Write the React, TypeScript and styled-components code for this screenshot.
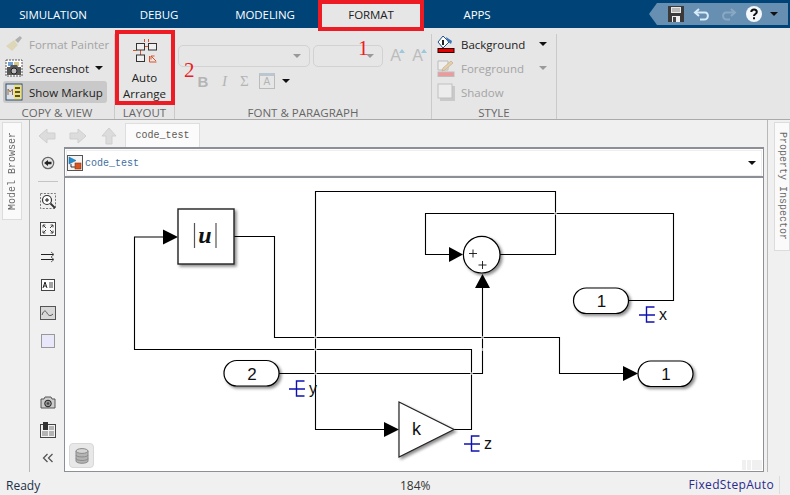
import React from "react";
import styled, { createGlobalStyle } from "styled-components";

const GlobalStyle = createGlobalStyle`
  html, body { margin: 0; padding: 0; background: #f0f0f0; }
  * { box-sizing: border-box; }
`;

const Page = styled.div`
  position: relative;
  width: 790px;
  height: 495px;
  overflow: hidden;
  display: flex;
  flex-direction: column;
  background: #f0f0f0;
  font-family: "Open Sans", "Liberation Sans", sans-serif;
  font-size: 11.5px;
  color: #222;
`;

const TabBar = styled.div`
  height: 28px;
  flex: none;
  display: flex;
  background: #004477;
  position: relative;
`;

const Tab = styled.div<{ $active?: boolean }>`
  position: relative;
  width: 106px;
  height: 28px;
  display: flex;
  align-items: center;
  justify-content: center;
  font-size: 11.5px;
  letter-spacing: -0.1px;
  color: ${(p) => (p.$active ? "#222" : "#fff")};
  background: ${(p) => (p.$active ? "#e6e6e6" : "transparent")};
`;

const RedBox = styled.div`
  position: absolute;
  border: 4px solid #ed1c24;
  pointer-events: none;
  z-index: 5;
`;

const TabMark = styled(RedBox)`
  left: 0;
  right: 0;
  top: 0;
  height: 31px;
`;

const ButtonMark = styled(RedBox)`
  left: 115px;
  top: 30px;
  width: 60px;
  height: 75px;
`;

const Note = styled.div<{ $x: number; $y: number }>`
  position: absolute;
  left: ${(p) => p.$x}px;
  top: ${(p) => p.$y}px;
  font-family: "Liberation Serif", serif;
  font-size: 21px;
  line-height: 21px;
  color: #ed1c24;
  z-index: 6;
`;

const QuickAccess = styled.div`
  position: absolute;
  left: 649px;
  top: 3px;
  width: 139px;
  height: 22px;
  padding-left: 18px;
  display: flex;
  align-items: center;
  background: #668fb2;
  clip-path: polygon(0 50%, 8px 0, 100% 0, 100% 100%, 8px 100%);
`;

const QuickIcon = styled.svg<{ $w: number }>`
  flex: none;
  width: 18px;
  height: 18px;
  margin-right: ${(p) => p.$w}px;
`;

const Ribbon = styled.div`
  height: 92px;
  flex: none;
  display: flex;
  background: #e6e6e6;
  border-bottom: 1px solid #aaa;
`;

const Section = styled.div<{ $w: number }>`
  position: relative;
  width: ${(p) => p.$w}px;
  flex: none;
  display: flex;
  flex-direction: column;
  margin-top: 6px;
  border-right: 1px solid #cacaca;
`;

const SectionBody = styled.div`
  flex: 1;
  min-height: 0;
  display: flex;
  flex-direction: column;
  gap: 2px;
  margin-top: -1px;
  padding: 0 7px 0 3px;
`;

const SectionLabel = styled.div`
  height: 15px;
  flex: none;
  padding-top: 1px;
  text-align: center;
  font-size: 11.5px;
  line-height: 15px;
  color: #666;
`;

const RibbonRow = styled.div<{ $on?: boolean; $off?: boolean }>`
  height: 22px;
  flex: none;
  display: flex;
  align-items: center;
  gap: 6px;
  padding-left: 2px;
  border-radius: 3px;
  font-size: 11.5px;
  white-space: nowrap;
  color: ${(p) => (p.$off ? "#a4a4a4" : "#222")};
  background: ${(p) => (p.$on ? "#c9c9c9" : "transparent")};
`;

const RowIcon = styled.svg`
  flex: none;
  width: 18px;
  height: 18px;
`;

const Caret = styled.span<{ $off?: boolean; $gap?: number }>`
  width: 0;
  height: 0;
  flex: none;
  margin-left: ${(p) => p.$gap ?? 0}px;
  border-left: 4px solid transparent;
  border-right: 4px solid transparent;
  border-top: 4px solid ${(p) => (p.$off ? "#999" : "#111")};
`;

const ArrangeButton = styled.div`
  display: flex;
  flex-direction: column;
  align-items: center;
  padding-top: 4px;
  font-size: 11.5px;
  line-height: 16px;
  color: #222;
`;

const ArrangeText = styled.div`
  margin-top: 6px;
  text-align: center;
`;

const FontBody = styled.div`
  flex: 1;
  padding: 11px 0 0 3px;
  display: flex;
  flex-direction: column;
`;

const ComboRow = styled.div`
  display: flex;
  align-items: center;
  gap: 3px;
`;

const Combo = styled.div<{ $w: number }>`
  width: ${(p) => p.$w}px;
  height: 22px;
  padding-right: 8px;
  display: flex;
  align-items: center;
  justify-content: flex-end;
  border: 1px solid #d2d2d2;
  border-radius: 5px;
`;

const GrowLetter = styled.span`
  position: relative;
  width: 19px;
  text-align: center;
  font-family: "Liberation Sans", sans-serif;
  font-size: 16px;
  color: #bcbcbc;
`;

const GrowMark = styled.span`
  position: absolute;
  right: 0;
  top: 2px;
  border-left: 3px solid transparent;
  border-right: 3px solid transparent;
  border-bottom: 4px solid #9cc8dc;
`;

const FormatRow = styled.div`
  display: flex;
  align-items: center;
  height: 22px;
  margin-top: 3px;
  padding-left: 19px;
  gap: 10px;
  font-family: "Liberation Serif", serif;
  font-size: 15px;
  color: #b4b4b4;
`;

const FormatB = styled.span`
  font-family: "Liberation Sans", sans-serif;
  font-weight: 700;
  width: 12px;
  text-align: center;
`;

const FormatI = styled.span`
  font-style: italic;
  width: 11px;
  text-align: center;
`;

const FormatBox = styled.span`
  width: 16px;
  height: 16px;
  border: 1px solid #bbb;
  border-top: 3px solid #bcc6d0;
  font-family: "Liberation Sans", sans-serif;
  font-size: 10px;
  line-height: 12px;
  text-align: center;
  margin-right: -3px;
`;

const Workspace = styled.div`
  flex: 1;
  min-height: 0;
  display: flex;
`;

const SideStrip = styled.div<{ $w: number; $right?: boolean }>`
  width: ${(p) => p.$w}px;
  flex: none;
  padding-top: 2px;
  display: flex;
  justify-content: ${(p) => (p.$right ? "flex-end" : "flex-start")};
  border-right: ${(p) => (p.$right ? "none" : "1px solid #b8b8b8")};
  border-left: ${(p) => (p.$right ? "1px solid #b8b8b8" : "none")};
  padding-left: ${(p) => (p.$right ? 0 : 2)}px;
`;

const SideTab = styled.div<{ $h: number; $right?: boolean }>`
  width: ${(p) => (p.$right ? 16 : 20)}px;
  height: ${(p) => p.$h}px;
  display: flex;
  align-items: center;
  justify-content: center;
  background: #fafafa;
  border: 1px solid #dcdcdc;
  writing-mode: vertical-rl;
  transform: ${(p) => (p.$right ? "none" : "rotate(180deg)")};
  font-family: "Liberation Mono", monospace;
  font-size: 10px;
  color: #6a6a6a;
`;

const Center = styled.div`
  flex: 1;
  min-width: 0;
  display: flex;
  flex-direction: column;
  padding-right: 3px;
`;

const NavRow = styled.div`
  height: 27px;
  flex: none;
  display: flex;
  align-items: flex-end;
  padding-left: 8px;
`;

const NavArrow = styled.svg`
  width: 18px;
  height: 18px;
  margin: 0 13px 2px 0;
  flex: none;
`;

const DocTab = styled.div`
  width: 75px;
  height: 24px;
  margin-left: -6px;
  display: flex;
  align-items: center;
  justify-content: center;
  background: #fbfbfb;
  border: 1px solid #dedede;
  border-bottom: none;
  font-family: "Liberation Mono", monospace;
  font-size: 10px;
  color: #5d5a55;
`;

const EditorRow = styled.div`
  flex: 1;
  min-height: 0;
  display: flex;
`;

const Palette = styled.div`
  width: 34px;
  flex: none;
  padding: 2px 0 0 2px;
  display: flex;
  flex-direction: column;
  align-items: center;
`;

const PaletteItem = styled.div`
  width: 32px;
  height: 28px;
  flex: none;
  display: flex;
  align-items: center;
  justify-content: center;
`;

const PaletteRule = styled.div`
  width: 20px;
  height: 1px;
  flex: none;
  margin: 4px 0 5px;
  background: #c4c4c4;
`;

const PaletteSpacer = styled.div`
  flex: 1;
`;

const Editor = styled.div`
  flex: 1;
  min-width: 0;
  display: flex;
  flex-direction: column;
  background: #fff;
  border: 1px solid #8c9096;
  border-top: 2px solid #8c9096;
`;

const AddressBar = styled.div`
  height: 26px;
  flex: none;
  margin: 1px 1px 0;
  padding: 0 5px 0 0;
  display: flex;
  align-items: center;
  gap: 2px;
  background: #fff;
  border: 1px solid #eee;
  font-family: "Liberation Mono", monospace;
  font-size: 10px;
  color: #3f6f9f;
`;

const AddressText = styled.span`
  flex: 1;
`;

const Canvas = styled.div`
  position: relative;
  flex: 1;
  min-height: 0;
  border-top: 2px solid #8c9096;
  background: #fff;
`;

const Diagram = styled.svg`
  display: block;
  width: 100%;
  height: 100%;
`;

const DataButton = styled.div`
  position: absolute;
  left: 4px;
  bottom: 3px;
  width: 25px;
  height: 25px;
  display: flex;
  align-items: center;
  justify-content: center;
  background: #e8e8e8;
  border: 1px solid #d8d8d8;
  border-radius: 4px;
`;

const Grip = styled.div`
  position: absolute;
  right: 1px;
  bottom: 1px;
  display: flex;
  gap: 1px;
`;

const GripCell = styled.div<{ $w: number }>`
  width: ${(p) => p.$w}px;
  height: 10px;
  background: #f0f0f0;
`;

const StatusBar = styled.div`
  height: 23px;
  flex: none;
  position: relative;
  display: flex;
  align-items: center;
  padding: 3px 6px 0;
  font-size: 12px;
  color: #1c2f4a;
`;

const StatusZoom = styled.span`
  position: absolute;
  left: 400px;
  color: #333;
`;

const StatusSolver = styled.span`
  margin-left: auto;
  padding-right: 5px;
  margin-right: 4px;
  border-right: 1px solid #dcdcdc;
  color: #2a2a8c;
  line-height: 18px;
  letter-spacing: 0.35px;
`;

const Label = styled.text<{ $size?: number }>`
  font-family: "Liberation Sans", sans-serif;
  font-size: ${(p) => p.$size ?? 16}px;
  fill: #111;
`;

const SaveIcon = () => (
  <QuickIcon $w={8} viewBox="0 0 18 18">
    <path d="M1 1h16v16H1z" fill="#3a3a3a" />
    <path d="M4 2h10v6H4z" fill="#e8e8e8" />
    <path d="M5 4h8M5 6h8" stroke="#888" />
    <path d="M5 11h8v6H5z" fill="#eee" />
    <path d="M6 12h3v5H6z" fill="#444" />
  </QuickIcon>
);

const UndoIcon = () => (
  <QuickIcon $w={8} viewBox="0 0 18 18">
    <path d="M6 4 2 7.5 6 11" fill="none" stroke="#d8ecfa" strokeWidth="2" />
    <path d="M3 7.5h9c4 0 4 7-1 7H7" fill="none" stroke="#d8ecfa" strokeWidth="2" />
  </QuickIcon>
);

const RedoIcon = () => (
  <QuickIcon $w={8} viewBox="0 0 18 18">
    <path d="M12 4l4 3.5-4 3.5" fill="none" stroke="#8aa8c2" strokeWidth="2" />
    <path d="M15 7.5H7c-4 0-4 7 1 7h3" fill="none" stroke="#8aa8c2" strokeWidth="2" />
  </QuickIcon>
);

const HelpIcon = () => (
  <QuickIcon $w={7} viewBox="0 0 18 18">
    <circle cx="9" cy="9" r="8" fill="#f4f8fb" />
    <path d="M6.3 7c0-3.4 5.5-3.4 5.5 0 0 2-2.8 2-2.8 4" fill="none" stroke="#111" strokeWidth="2" />
    <path d="M8 12.3h2v2H8z" fill="#111" />
  </QuickIcon>
);

const PainterIcon = () => (
  <RowIcon viewBox="0 0 18 18">
    <path d="M1 11 9 5l4 5-6 6z" fill="#ddd6b8" />
    <path d="M10 5l5-4 2 2-4 5z" fill="#b0b0b0" />
  </RowIcon>
);

const ScreenshotIcon = () => (
  <RowIcon viewBox="0 0 18 18">
    <rect x="1" y="1" width="16" height="16" fill="#fff" stroke="#555" strokeDasharray="2 1" />
    <path d="M3 3h5v4H3z" fill="#6f9fd0" />
    <path d="M9 3h5v4H9z" fill="#d8c890" />
    <path d="M2 8h3l1-2h6l1 2h3v8H2z" fill="#555" />
    <circle cx="9" cy="12" r="3" fill="#bbb" stroke="#222" />
  </RowIcon>
);

const MarkupIcon = () => (
  <RowIcon viewBox="0 0 18 18">
    <rect x="1" y="1" width="16" height="16" fill="#dde0e4" stroke="#2f4f70" />
    <rect x="9" y="2" width="7.5" height="14" fill="#f0e070" />
    <path d="M3 12V6l2.2 3L7.5 6v6" fill="none" stroke="#9a6a40" />
    <path d="M10 5h5M10 9h5M10 13h5" stroke="#222" strokeWidth="1.4" />
  </RowIcon>
);

const ArrangeIcon = () => (
  <svg width="26" height="26" viewBox="0 0 26 26">
    <path d="M12.5 1v3M16.5 1v3M1 12.5h3.5M12.5 8.5h4M8.5 12v5" stroke="#d9532c" fill="none" />
    <rect x="4.5" y="5.5" width="8" height="6.5" fill="#efefef" stroke="#333" />
    <rect x="16.5" y="5.5" width="8" height="6.5" fill="#efefef" stroke="#333" />
    <rect x="4.5" y="17" width="8" height="6.5" fill="#efefef" stroke="#333" />
    <path d="M17.5 18v6h7" stroke="#d9532c" fill="none" />
    <path d="M24 23l-5-5M19 21.5V18h3.5" stroke="#d9532c" fill="none" />
  </svg>
);

const BackgroundIcon = () => (
  <RowIcon viewBox="0 0 18 18">
    <path d="M6 1 1 7l5 6 6-6z" fill="#fff" stroke="#23518a" />
    <path d="M9 2l6 4-1 3-4-3z" fill="#3f76b5" />
    <path d="M5 5h2v5H5z" fill="#222" />
    <rect x="1" y="13.5" width="16" height="4" fill="#e60000" stroke="#300" />
  </RowIcon>
);

const ForegroundIcon = () => (
  <RowIcon viewBox="0 0 18 18">
    <path d="M1 2h10v9H1z" fill="#eee" stroke="#bbb" />
    <path d="M6 9l8-7 2 2-8 7-3 1z" fill="#e8cfa8" stroke="#b8a88c" strokeWidth=".6" />
    <rect x="1" y="13" width="16" height="4.4" fill="#ee9a9a" stroke="#bbb" />
  </RowIcon>
);

const ShadowIcon = () => (
  <RowIcon viewBox="0 0 18 18">
    <rect x="3" y="3" width="15" height="15" fill="#c9c9c9" />
    <rect x="1" y="1" width="14" height="14" fill="#ececec" stroke="#c0c0c0" />
  </RowIcon>
);

const LeftArrow = () => (
  <NavArrow viewBox="0 0 18 18">
    <path d="M1 9l8-7v4h8v6H9v4z" fill="#dcdcdc" stroke="#cfcfcf" />
  </NavArrow>
);

const RightArrow = () => (
  <NavArrow viewBox="0 0 18 18">
    <path d="M17 9 9 2v4H1v6h8v4z" fill="#dcdcdc" stroke="#cfcfcf" />
  </NavArrow>
);

const UpArrow = () => (
  <NavArrow viewBox="0 0 18 18">
    <path d="M9 1 2 9h4v8h6V9h4z" fill="#dcdcdc" stroke="#cfcfcf" />
  </NavArrow>
);

const ModelIcon = () => (
  <svg width="16" height="16" viewBox="0 0 16 16">
    <rect x=".5" y=".5" width="15" height="15" fill="#f4f4f4" stroke="#555" />
    <path d="M2 2l7 3.5L2 9z" fill="#1f8fd0" stroke="#145f90" strokeWidth=".5" />
    <path d="M4 9v3h4" fill="none" stroke="#333" />
    <rect x="8" y="8" width="6" height="6" fill="#d9531e" stroke="#8a3210" strokeWidth=".6" />
  </svg>
);

const UpLevelIcon = () => (
  <svg width="14" height="14" viewBox="0 0 16 16">
    <circle cx="8" cy="8" r="6.5" fill="#e6e6e6" stroke="#666" strokeWidth="1.4" />
    <path d="M3.5 8 8 4.5v2h4v3H8v2z" fill="#222" />
  </svg>
);

const ZoomAreaIcon = () => (
  <svg width="16" height="16" viewBox="0 0 16 16">
    <rect x=".5" y=".5" width="15" height="15" fill="none" stroke="#777" strokeDasharray="2 1.4" />
    <circle cx="7" cy="7" r="4.5" fill="#fff" stroke="#333" strokeWidth="1.2" />
    <path d="M5 7h4M7 5v4" stroke="#111" />
    <path d="M10.5 10.5 15 15" stroke="#333" strokeWidth="1.8" />
  </svg>
);

const FitIcon = () => (
  <svg width="16" height="14" viewBox="0 0 16 14">
    <rect x=".5" y=".5" width="15" height="13" fill="#f8f8f8" stroke="#444" />
    <path d="M3 3l3 3M3 3h2.4M3 3v2.4M13 3l-3 3M13 3h-2.4M13 3v2.4M3 11l3-3M3 11h2.4M3 11V8.6M13 11l-3-3M13 11h-2.4M13 11V8.6" stroke="#444" fill="none" />
  </svg>
);

const PortsIcon = () => (
  <svg width="16" height="12" viewBox="0 0 16 12">
    <path d="M1 3.5h13M1 8.5h13" stroke="#222" />
    <path d="M11 1l3 2.5-3 2.5M11 6l3 2.5-3 2.5" fill="none" stroke="#666" />
  </svg>
);

const TextIcon = () => (
  <svg width="14" height="12" viewBox="0 0 14 12">
    <rect x=".5" y=".5" width="13" height="11" fill="#fff" stroke="#444" />
    <path d="M2 9l2-6 2 6M2.8 7h2.4" fill="none" stroke="#222" />
    <path d="M8 4h4M8 6h4M8 8h4" stroke="#444" />
  </svg>
);

const ImageIcon = () => (
  <svg width="16" height="14" viewBox="0 0 16 14">
    <rect x=".5" y=".5" width="15" height="13" fill="#d8d8d8" stroke="#555" />
    <path d="M2 9c2-6 4-4 5-2s3 4 6 1" fill="none" stroke="#555" />
  </svg>
);

const AreaIcon = () => (
  <svg width="14" height="14" viewBox="0 0 14 14">
    <rect x=".5" y=".5" width="13" height="13" fill="#e8e8fa" stroke="#999" />
  </svg>
);

const CameraIcon = () => (
  <svg width="16" height="13" viewBox="0 0 16 13">
    <path d="M1 3h3l1-2h6l1 2h3v9H1z" fill="#ccc" stroke="#555" />
    <circle cx="8" cy="7.5" r="3.3" fill="#999" stroke="#222" />
    <circle cx="8" cy="7.5" r="1.3" fill="#444" />
  </svg>
);

const ReportIcon = () => (
  <svg width="16" height="16" viewBox="0 0 16 16">
    <rect x=".5" y="2.5" width="15" height="13" fill="#f2f2f2" stroke="#444" />
    <path d="M3 0h5v8H3z" fill="#333" />
    <path d="M9 4h5v4H9zM2 9h6v5H2zM9 9h5v5H9z" fill="#b4b4b4" />
  </svg>
);

const CollapseIcon = () => (
  <svg width="12" height="10" viewBox="0 0 12 10">
    <path d="M5.5 1 1.5 5l4 4M10.5 1l-4 4 4 4" fill="none" stroke="#555" strokeWidth="1.3" />
  </svg>
);

const DatabaseIcon = () => (
  <svg width="14" height="16" viewBox="0 0 14 16">
    <path d="M1 3v10c0 3 12 3 12 0V3z" fill="#b4b4b4" stroke="#8a8a8a" />
    <ellipse cx="7" cy="3" rx="6" ry="2.4" fill="#d4d4d4" stroke="#8a8a8a" />
    <path d="M1 7c0 2.6 12 2.6 12 0M1 10.5c0 2.6 12 2.6 12 0" fill="none" stroke="#8a8a8a" />
  </svg>
);

const Marker = ({ x, y, label }: { x: number; y: number; label: string }) => (
  <g>
    <path
      d={`M${x} ${y + 8}h16M${x + 15.5} ${y}h-8v15h8`}
      fill="none"
      stroke="#1010b0"
      strokeWidth="1.4"
    />
    <Label x={x + 20} y={y + 13}>
      {label}
    </Label>
  </g>
);

const Head = ({ points }: { points: string }) => <polygon points={points} fill="#000" />;

const Port = ({ x, y, value }: { x: number; y: number; value: string }) => (
  <g>
    <rect x={x} y={y} width="55" height="25.5" rx="12.7" fill="#fff" stroke="#000" strokeWidth="1.2" filter="url(#shade)" />
    <Label $size={17} x={x + 28} y={y + 19} textAnchor="middle">
      {value}
    </Label>
  </g>
);

const Hop = ({ x, y }: { x: number; y: number }) => <circle cx={x} cy={y} r="1.5" fill="#fff" opacity="0.65" />;

const BlockDiagram = () => (
  <Diagram viewBox="65 178 698 293">
    <defs>
      <filter id="shade" x="-20%" y="-20%" width="150%" height="150%">
        <feDropShadow dx="2" dy="2" stdDeviation="1.6" floodColor="#000" floodOpacity="0.45" />
      </filter>
    </defs>
    <g fill="none" stroke="#000" strokeWidth="1.1">
      <path d="M500 254.5H555.5V191.5H315.5V429.5H386" />
      <path d="M454 429.5H471.5V349.5H134.5V237H165" />
      <path d="M234 236.5H274.5V337.5H559.5V373.5H625" />
      <path d="M279 373.5H482.5V286" />
      <path d="M629 300.5H673.5V213.5H425.5V254.5H450" />
    </g>
    <Hop x={315.5} y={337.5} />
    <Hop x={315.5} y={349.5} />
    <Hop x={315.5} y={373.5} />
    <Hop x={482.5} y={337.5} />
    <Hop x={482.5} y={349.5} />
    <Hop x={471.5} y={373.5} />
    <Hop x={555.5} y={213.5} />
    <Head points="163,229.5 178,237 163,244.5" />
    <Head points="449,247 463,254.5 449,262" />
    <Head points="475,288 482.5,274 490,288" />
    <Head points="384,422 399,429.5 384,437" />
    <Head points="623,366 638,373.5 623,381" />

    <rect x="178" y="209" width="56" height="55" fill="#fff" stroke="#222" strokeWidth="1.4" filter="url(#shade)" />
    <path d="M194.5 223v25M216 223v25" stroke="#555" strokeWidth="1.2" />
    <text x="205" y="243" textAnchor="middle" fontFamily="Liberation Serif, serif" fontSize="24" fontWeight="700" fontStyle="italic" fill="#111">
      u
    </text>

    <circle cx="481.7" cy="254.7" r="18.3" fill="#fff" stroke="#000" strokeWidth="1.2" filter="url(#shade)" />
    <path d="M469 253.5h8M473 249.5v8M478.5 265h8M482.5 261v8" stroke="#111" strokeWidth="0.9" />

    <path d="M399 402 454 429.5 399 457Z" fill="#fff" stroke="#222" strokeWidth="1.2" filter="url(#shade)" />
    <Label $size={18} x={412} y={435}>
      k
    </Label>

    <Port x={224} y={360.5} value="2" />
    <Port x={573.5} y={288} value="1" />
    <Port x={638} y={361} value="1" />

    <Marker x={289} y={381} label="y" />
    <Marker x={464} y={436} label="z" />
    <Marker x={639} y={307} label="x" />
  </Diagram>
);

export default function App() {
  return (
    <Page>
      <GlobalStyle />
      <TabBar>
        <Tab>SIMULATION</Tab>
        <Tab>DEBUG</Tab>
        <Tab>MODELING</Tab>
        <Tab $active>
          FORMAT
          <TabMark />
        </Tab>
        <Tab>APPS</Tab>
        <QuickAccess>
          <SaveIcon />
          <UndoIcon />
          <RedoIcon />
          <HelpIcon />
          <Caret />
        </QuickAccess>
      </TabBar>

      <Ribbon>
        <Section $w={115}>
          <SectionBody>
            <RibbonRow $off>
              <PainterIcon />
              Format Painter
            </RibbonRow>
            <RibbonRow>
              <ScreenshotIcon />
              Screenshot
              <Caret $gap={0} />
            </RibbonRow>
            <RibbonRow $on>
              <MarkupIcon />
              Show Markup
            </RibbonRow>
          </SectionBody>
          <SectionLabel>COPY &amp; VIEW</SectionLabel>
        </Section>
        <Section $w={60}>
          <ArrangeButton>
            <ArrangeIcon />
            <ArrangeText>
              Auto
              <br />
              Arrange
            </ArrangeText>
          </ArrangeButton>
          <SectionBody />
          <SectionLabel>LAYOUT</SectionLabel>
        </Section>
        <Section $w={257}>
          <FontBody>
            <ComboRow>
              <Combo $w={132}>
                <Caret $off />
              </Combo>
              <Combo $w={70}>
                <Caret $off />
              </Combo>
              <GrowLetter>
                A<GrowMark />
              </GrowLetter>
              <GrowLetter>
                A<GrowMark />
              </GrowLetter>
            </ComboRow>
            <FormatRow>
              <FormatB>B</FormatB>
              <FormatI>I</FormatI>
              <span>Σ</span>
              <FormatBox>A</FormatBox>
              <Caret />
            </FormatRow>
          </FontBody>
          <SectionLabel>FONT &amp; PARAGRAPH</SectionLabel>
        </Section>
        <Section $w={125}>
          <SectionBody>
            <RibbonRow>
              <BackgroundIcon />
              Background
              <Caret $gap={8} />
            </RibbonRow>
            <RibbonRow $off>
              <ForegroundIcon />
              Foreground
              <Caret $off $gap={9} />
            </RibbonRow>
            <RibbonRow $off>
              <ShadowIcon />
              Shadow
            </RibbonRow>
          </SectionBody>
          <SectionLabel>STYLE</SectionLabel>
        </Section>
      </Ribbon>

      <Workspace>
        <SideStrip $w={30}>
          <SideTab $h={98}>Model Browser</SideTab>
        </SideStrip>
        <Center>
          <NavRow>
            <LeftArrow />
            <RightArrow />
            <UpArrow />
            <DocTab>code_test</DocTab>
          </NavRow>
          <EditorRow>
            <Palette>
              <PaletteItem>
                <UpLevelIcon />
              </PaletteItem>
              <PaletteRule />
              <PaletteItem>
                <ZoomAreaIcon />
              </PaletteItem>
              <PaletteItem>
                <FitIcon />
              </PaletteItem>
              <PaletteItem>
                <PortsIcon />
              </PaletteItem>
              <PaletteItem>
                <TextIcon />
              </PaletteItem>
              <PaletteItem>
                <ImageIcon />
              </PaletteItem>
              <PaletteItem>
                <AreaIcon />
              </PaletteItem>
              <PaletteSpacer />
              <PaletteItem>
                <CameraIcon />
              </PaletteItem>
              <PaletteItem>
                <ReportIcon />
              </PaletteItem>
              <PaletteItem>
                <CollapseIcon />
              </PaletteItem>
            </Palette>
            <Editor>
              <AddressBar>
                <ModelIcon />
                <AddressText>code_test</AddressText>
                <Caret />
              </AddressBar>
              <Canvas>
                <BlockDiagram />
                <DataButton>
                  <DatabaseIcon />
                </DataButton>
                <Grip>
                  <GripCell $w={4} />
                  <GripCell $w={4} />
                  <GripCell $w={10} />
                </Grip>
              </Canvas>
            </Editor>
          </EditorRow>
        </Center>
        <SideStrip $w={23} $right>
          <SideTab $h={129} $right>
            Property Inspector
          </SideTab>
        </SideStrip>
      </Workspace>

      <StatusBar>
        Ready
        <StatusZoom>184%</StatusZoom>
        <StatusSolver>FixedStepAuto</StatusSolver>
      </StatusBar>

      <ButtonMark />
      <Note $x={358} $y={38}>
        1
      </Note>
      <Note $x={184} $y={60}>
        2
      </Note>
    </Page>
  );
}
